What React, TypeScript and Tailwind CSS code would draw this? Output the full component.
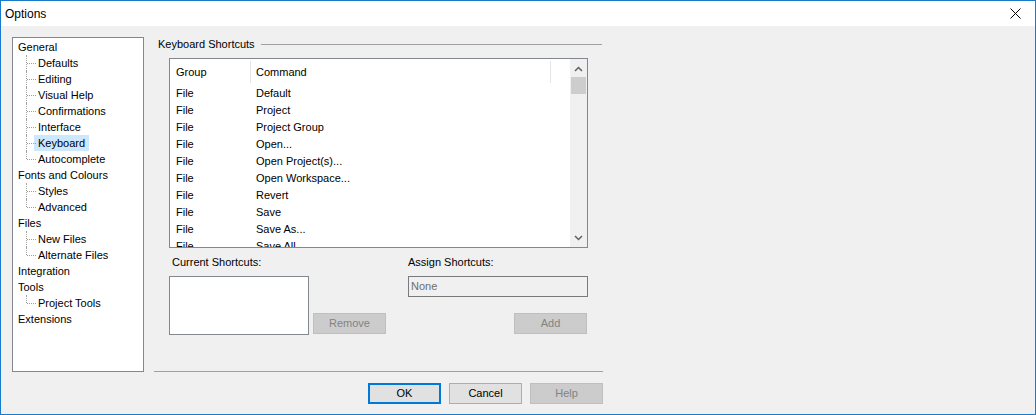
import React from "react";

const tree: { label: string; children?: string[] }[] = [
  { label: "General", children: ["Defaults", "Editing", "Visual Help", "Confirmations", "Interface", "Keyboard", "Autocomplete"] },
  { label: "Fonts and Colours", children: ["Styles", "Advanced"] },
  { label: "Files", children: ["New Files", "Alternate Files"] },
  { label: "Integration" },
  { label: "Tools", children: ["Project Tools"] },
  { label: "Extensions" },
];

const commands = [
  "Default",
  "Project",
  "Project Group",
  "Open...",
  "Open Project(s)...",
  "Open Workspace...",
  "Revert",
  "Save",
  "Save As...",
  "Save All",
];

function TreeChild({ label, last }: { label: string; last: boolean }) {
  const selected = label === "Keyboard";
  return (
    <div className="flex h-[16px] items-center">
      <div className="relative h-[16px] w-[16px]">
        <div
          className={`absolute left-[8px] top-0 border-l border-dotted border-[#a0a0a0] ${last ? "h-[8px]" : "h-[16px]"}`}
        />
        <div className="absolute left-[9px] top-[8px] w-[9px] border-t border-dotted border-[#a0a0a0]" />
      </div>
      <span className={`px-[4px] leading-[16px] ${selected ? "bg-[#cce8ff]" : ""}`}>{label}</span>
    </div>
  );
}

function Button({ label, kind }: { label: string; kind: "default" | "normal" | "disabled" }) {
  const cls =
    kind === "default"
      ? "border-2 border-[#0078d7] bg-[#e1e1e1] text-black"
      : kind === "normal"
        ? "border border-[#adadad] bg-[#e1e1e1] text-black"
        : "border border-[#bfbfbf] bg-[#cccccc] text-[#838383]";
  return (
    <div className={`flex h-[21px] w-[73px] items-center justify-center text-[11px] ${cls}`}>{label}</div>
  );
}

export default function App() {
  return (
    <div
      className="flex h-[415px] w-[1036px] flex-col border border-[#1979ca] bg-[#f0f0f0] text-[11px] text-black"
      style={{ fontFamily: '"Liberation Sans", Arial, sans-serif' }}
    >
      {/* title bar */}
      <div className="flex h-[25px] items-center justify-between bg-white pl-[4px] pr-[14px]">
        <span className="text-[12px]">Options</span>
        <svg width="11" height="11" viewBox="0 0 11 11">
          <path d="M0.5 0.5 L10.5 10.5 M10.5 0.5 L0.5 10.5" stroke="#000" strokeWidth="1" />
        </svg>
      </div>

      <div className="flex flex-1 pl-[11px] pt-[11px]">
        {/* tree */}
        <div className="h-[335px] w-[132px] border border-[#828790] bg-white pl-[5px] pt-[1px]">
          {tree.map((node) => (
            <div key={node.label}>
              <div className="h-[16px] leading-[16px]">{node.label}</div>
              {node.children?.map((c, i) => (
                <TreeChild key={c} label={c} last={i === node.children!.length - 1} />
              ))}
            </div>
          ))}
        </div>

        {/* right side */}
        <div className="ml-[10px] flex w-[449px] flex-col">
          <div className="flex h-[14px] items-center pl-[4px]">
            <span className="leading-[14px]">Keyboard Shortcuts</span>
            <div className="ml-[6px] mr-[1px] h-px flex-1 bg-[#a0a0a0]" />
          </div>

          {/* shortcut list */}
          <div className="ml-[15px] mt-[7px] flex h-[190px] w-[419px] border border-[#828790] bg-white">
            <div className="flex-1 overflow-hidden">
              <div className="flex h-[26px] items-center">
                <div className="w-[80px] pl-[6px]">Group</div>
                <div className="h-[22px] w-px bg-[#e5e5e5]" />
                <div className="w-[299px] pl-[5px]">Command</div>
                <div className="h-[22px] w-px bg-[#e5e5e5]" />
              </div>
              {commands.map((c) => (
                <div key={c} className="flex h-[17px] items-center">
                  <div className="w-[81px] pl-[6px]">File</div>
                  <div className="pl-[5px]">{c}</div>
                </div>
              ))}
            </div>
            <div className="flex w-[17px] flex-col items-center bg-[#f0f0f0]">
              <svg width="9" height="6" viewBox="0 0 9 6" className="mt-[7px]">
                <path d="M1 5 L4.5 1.5 L8 5" stroke="#606060" strokeWidth="1.5" fill="none" />
              </svg>
              <div className="mt-[5px] h-[17px] w-[15px] bg-[#cdcdcd]" />
              <div className="flex-1" />
              <svg width="9" height="6" viewBox="0 0 9 6" className="mb-[6px]">
                <path d="M1 1 L4.5 4.5 L8 1" stroke="#606060" strokeWidth="1.5" fill="none" />
              </svg>
            </div>
          </div>

          {/* current / assign */}
          <div className="ml-[15px] mt-[7px] flex">
            <div className="flex w-[140px] flex-col">
              <div className="h-[14px] pl-[3px] leading-[14px]">Current Shortcuts:</div>
              <div className="mt-[7px] h-[59px] w-[140px] border border-[#828790] bg-white" />
            </div>
            <div className="mb-[1px] ml-[4px] self-end">
              <Button label="Remove" kind="disabled" />
            </div>
            <div className="ml-[22px] flex w-[180px] flex-col">
              <div className="h-[14px] leading-[14px]">Assign Shortcuts:</div>
              <div className="mt-[7px] flex h-[21px] items-center border border-[#7a7a7a] bg-[#f0f0f0] pl-[2px] text-[#6d6d6d]">
                None
              </div>
              <div className="mt-[16px] flex justify-end pr-[1px]">
                <Button label="Add" kind="disabled" />
              </div>
            </div>
          </div>

          <div className="mt-[36px] h-px w-full bg-[#a0a0a0]" />

          <div className="mt-[11px] flex justify-end gap-[8px]">
            <Button label="OK" kind="default" />
            <Button label="Cancel" kind="normal" />
            <Button label="Help" kind="disabled" />
          </div>
        </div>
      </div>
    </div>
  );
}
